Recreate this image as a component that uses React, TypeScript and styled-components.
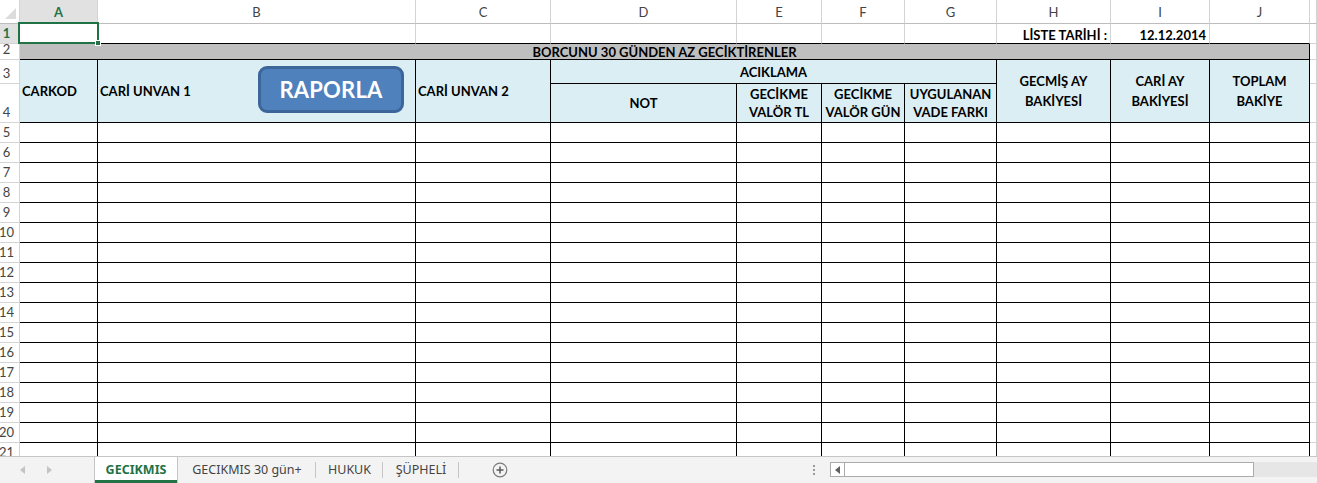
import React from 'react'
import styled, { createGlobalStyle } from 'styled-components'

const GREEN = '#217346';
const GRID = '#d4d4d4';
const INK = '#000';
const HEAD_BLUE = '#daeef3';

const COLUMNS = ['A', 'B', 'C', 'D', 'E', 'F', 'G', 'H', 'I', 'J'];
const ROWS = Array.from({ length: 21 }, (_, i) => i + 1);
const DATA_ROWS = ROWS.filter(n => n >= 5);

const GlobalStyle = createGlobalStyle`
  *, *::before, *::after { box-sizing: border-box; }
  html, body { margin: 0; padding: 0; background: #fff; overflow: hidden; }
  body { font-family: Lato, "Liberation Sans", sans-serif; }
`;

const Window = styled.div`
  width: 1317px;
  height: 483px;
  display: flex;
  flex-direction: column;
  background: #fff;
`;

const Sheet = styled.div`
  flex: 1;
  min-height: 0;
  overflow: hidden;
  display: grid;
  grid-template-columns: 20px 78px 318px 135px 186px 85px 83px 92px 114px 99px 100px 1fr;
  grid-template-rows: 24px 20px 16px 24px 39px repeat(17, 20px);
  font-size: 13px;
`;

interface PlaceProps {
  $c: number;
  $r: number;
  $cs?: number;
  $rs?: number;
}

const Corner = styled.div`
  grid-column: 1;
  grid-row: 1;
  position: relative;
  border-right: 1px solid ${GRID};
  border-bottom: 1px solid #bdbdbd;

  &::after {
    content: '';
    position: absolute;
    right: 3px;
    bottom: 4px;
    border-left: 11px solid transparent;
    border-bottom: 11px solid #dcdcdc;
  }
`;

const ColHead = styled.div<{ $c: number; $active?: boolean }>`
  grid-column: ${p => p.$c};
  grid-row: 1;
  display: flex;
  align-items: center;
  justify-content: center;
  padding-top: 1px;
  color: ${p => (p.$active ? GREEN : '#444')};
  font-weight: ${p => (p.$active ? 700 : 400)};
  background: ${p => (p.$active ? '#e1e1e1' : '#fff')};
  border-right: 1px solid ${GRID};
  border-bottom: ${p => (p.$active ? `2px solid ${GREEN}` : '1px solid #bdbdbd')};
`;

const RowHead = styled.div<{ $r: number; $active?: boolean }>`
  grid-column: 1;
  grid-row: ${p => p.$r};
  display: flex;
  align-items: flex-end;
  justify-content: center;
  padding: 0 6px 2px 0;
  line-height: 16px;
  white-space: nowrap;
  color: ${p => (p.$active ? GREEN : '#444')};
  font-weight: ${p => (p.$active ? 700 : 400)};
  background: ${p => (p.$active ? '#e1e1e1' : '#fff')};
  border-right: 1px solid ${GRID};
  border-bottom: 1px solid ${GRID};
`;

const Cell = styled.div<PlaceProps & { $rb?: boolean; $bb?: boolean }>`
  grid-column: ${p => p.$c} / span ${p => p.$cs ?? 1};
  grid-row: ${p => p.$r} / span ${p => p.$rs ?? 1};
  border-right: 1px solid ${p => (p.$rb ? INK : GRID)};
  border-bottom: 1px solid ${p => (p.$bb ? INK : GRID)};
`;

const SelectedCell = styled(Cell)`
  position: relative;

  &::after {
    content: '';
    position: absolute;
    inset: -2px -2px -1px -2px;
    border: 2px solid ${GREEN};
  }

  &::before {
    content: '';
    position: absolute;
    right: -4px;
    bottom: -3px;
    width: 6px;
    height: 6px;
    background: ${GREEN};
    border: 1px solid #fff;
    z-index: 1;
  }
`;

const ValueCell = styled(Cell)`
  display: flex;
  align-items: center;
  justify-content: flex-end;
  padding: 2px 3px 0 0;
  font-weight: 700;
  white-space: nowrap;
`;

const Title = styled(Cell)`
  display: flex;
  align-items: center;
  justify-content: center;
  background: #bfbfbf;
  font-weight: 700;
  line-height: 14px;
  border-right-color: ${INK};
  border-bottom-color: ${INK};
`;

const Head = styled(Cell)<{ $left?: boolean; $lh?: number }>`
  position: relative;
  display: flex;
  align-items: center;
  justify-content: ${p => (p.$left ? 'flex-start' : 'center')};
  padding: 0 ${p => (p.$left ? '0 0 2px' : '0')};
  text-align: ${p => (p.$left ? 'left' : 'center')};
  line-height: ${p => p.$lh ?? 20}px;
  white-space: nowrap;
  font-weight: 700;
  background: ${HEAD_BLUE};
  border-right-color: ${INK};
  border-bottom-color: ${INK};
`;

const ReportButton = styled.div`
  position: absolute;
  left: 160px;
  top: 6px;
  width: 146px;
  height: 47px;
  display: flex;
  align-items: center;
  justify-content: center;
  background: #4f81bd;
  border: 3px solid #3c659a;
  border-radius: 9px;
  color: #fff;
  font-family: Lato, "Liberation Sans", sans-serif;
  font-size: 22px;
  font-weight: 700;
  letter-spacing: 0.2px;
`;

/* sheet tabs + horizontal scroll bar */

const TabBar = styled.div`
  height: 27px;
  flex-shrink: 0;
  display: flex;
  align-items: stretch;
  background: #f3f3f3;
  border-top: 1px solid #c6c6c6;
  font-family: "Noto Sans", "Open Sans", sans-serif;
  font-size: 12.5px;
  color: #444;
`;

const Nav = styled.div`
  width: 94px;
  display: flex;
  align-items: center;
  gap: 22px;
  padding-left: 20px;
`;

const Tab = styled.div<{ $active?: boolean; $w: number }>`
  position: relative;
  width: ${p => p.$w}px;
  display: flex;
  align-items: center;
  justify-content: center;
  padding-bottom: 1px;
  white-space: nowrap;
  color: ${p => (p.$active ? GREEN : '#444')};
  font-weight: ${p => (p.$active ? 700 : 400)};
  background: ${p => (p.$active ? '#fff' : 'transparent')};
  border-left: ${p => (p.$active ? '1px solid #c6c6c6' : 'none')};
  border-right: ${p => (p.$active ? '1px solid #c6c6c6' : 'none')};
  box-shadow: ${p => (p.$active ? `inset 0 -3px 0 ${GREEN}` : 'none')};

  &::after {
    content: '';
    display: ${p => (p.$active ? 'none' : 'block')};
    position: absolute;
    right: 0;
    top: 5px;
    bottom: 5px;
    width: 1px;
    background: #c6c6c6;
  }
`;

const AddSheet = styled.div`
  display: flex;
  align-items: center;
  margin-left: 33px;
  flex: 1;
`;

const Dots = styled.div`
  display: flex;
  flex-direction: column;
  justify-content: center;
  gap: 2px;
  margin-right: 15px;

  span {
    width: 2px;
    height: 2px;
    background: #9a9a9a;
  }
`;

const HScroll = styled.div`
  align-self: center;
  margin-top: -1px;
  width: 424px;
  height: 15px;
  display: flex;
  background: #fff;
  border: 1px solid #ababab;
`;

const ScrollArrow = styled.div`
  width: 14px;
  display: flex;
  align-items: center;
  justify-content: center;
  border-right: 1px solid #ababab;
`;

const Track = styled.div`
  align-self: center;
  margin-top: -1px;
  width: 63px;
  height: 15px;
  background: #e6e6e6;
`;

const Triangle = ({ dir, color }: { dir: 'left' | 'right'; color: string }) => (
  <svg width="5" height="8" viewBox="0 0 5 8">
    <path d={dir === 'left' ? 'M5 0 L0 4 L5 8 Z' : 'M0 0 L5 4 L0 8 Z'} fill={color} />
  </svg>
);

const PlusCircle = () => (
  <svg width="16" height="16" viewBox="0 0 16 16">
    <circle cx="8" cy="8" r="6.8" fill="none" stroke="#7a7a7a" strokeWidth="1.2" />
    <path d="M8 4.5 V11.5 M4.5 8 H11.5" stroke="#5a5a5a" strokeWidth="1.5" />
  </svg>
);

const App = () => {
  return (
    <>
      <GlobalStyle />
      <Window>
        <Sheet>
          <Corner />
          {COLUMNS.map((letter, i) => (
            <ColHead key={letter} $c={i + 2} $active={letter === 'A'}>{letter}</ColHead>
          ))}
          <ColHead $c={12} />

          {ROWS.map(n => (
            <RowHead key={n} $r={n + 1} $active={n === 1}>{n}</RowHead>
          ))}

          {/* row 1 */}
          <SelectedCell $c={2} $r={2} $bb />
          {[3, 4, 5, 6, 7, 8].map(c => <Cell key={c} $c={c} $r={2} $bb />)}
          <ValueCell $c={9} $r={2} $bb>LİSTE TARİHİ :</ValueCell>
          <ValueCell $c={10} $r={2} $bb>12.12.2014</ValueCell>
          <Cell $c={11} $r={2} $bb />
          <Cell $c={12} $r={2} />

          {/* row 2 */}
          <Title $c={2} $cs={10} $r={3}>BORCUNU 30 GÜNDEN AZ GECİKTİRENLER</Title>
          <Cell $c={12} $r={3} />

          {/* rows 3-4: table header */}
          <Head $c={2} $r={4} $rs={2} $left>CARKOD</Head>
          <Head $c={3} $r={4} $rs={2} $left>
            CARİ UNVAN 1
            <ReportButton>RAPORLA</ReportButton>
          </Head>
          <Head $c={4} $r={4} $rs={2} $left>CARİ UNVAN 2</Head>
          <Head $c={5} $cs={4} $r={4}>ACIKLAMA</Head>
          <Head $c={5} $r={5}>NOT</Head>
          <Head $c={6} $r={5} $lh={18}>GECİKME<br />VALÖR TL</Head>
          <Head $c={7} $r={5} $lh={18}>GECİKME<br />VALÖR GÜN</Head>
          <Head $c={8} $r={5} $lh={18}>UYGULANAN<br />VADE FARKI</Head>
          <Head $c={9} $r={4} $rs={2}>GECMİŞ AY<br />BAKİYESİ</Head>
          <Head $c={10} $r={4} $rs={2}>CARİ AY<br />BAKİYESİ</Head>
          <Head $c={11} $r={4} $rs={2}>TOPLAM<br />BAKİYE</Head>
          <Cell $c={12} $r={4} />
          <Cell $c={12} $r={5} />

          {/* data rows */}
          {DATA_ROWS.map(n => (
            <React.Fragment key={n}>
              {COLUMNS.map((letter, i) => (
                <Cell key={letter} $c={i + 2} $r={n + 1} $rb $bb />
              ))}
              <Cell $c={12} $r={n + 1} />
            </React.Fragment>
          ))}
        </Sheet>

        <TabBar>
          <Nav>
            <Triangle dir="left" color="#c3c3c3" />
            <Triangle dir="right" color="#c3c3c3" />
          </Nav>
          <Tab $active $w={84}>GECIKMIS</Tab>
          <Tab $w={138}>GECIKMIS 30 gün+</Tab>
          <Tab $w={67}>HUKUK</Tab>
          <Tab $w={76}>ŞÜPHELİ</Tab>
          <AddSheet>
            <PlusCircle />
          </AddSheet>
          <Dots>
            <span />
            <span />
            <span />
          </Dots>
          <HScroll>
            <ScrollArrow>
              <Triangle dir="left" color="#606060" />
            </ScrollArrow>
          </HScroll>
          <Track />
        </TabBar>
      </Window>
    </>
  )
}

export default App
